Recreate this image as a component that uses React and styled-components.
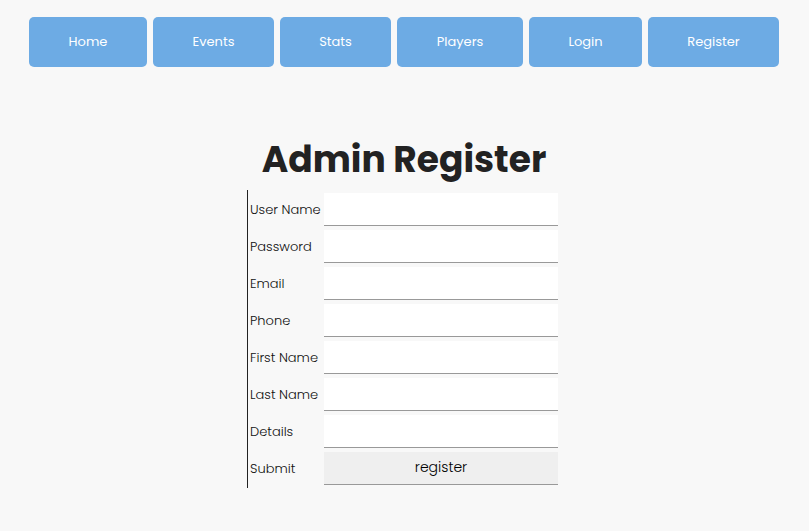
import React from "react";
import styled, { createGlobalStyle } from "styled-components";

const GlobalStyle = createGlobalStyle`
  * { box-sizing: border-box; }
  body {
    margin: 0;
    background: #f8f8f8;
    color: #222222;
    font-family: Poppins, Inter, sans-serif;
    font-size: 13px;
    line-height: 20px;
  }
`;

const Page = styled.div`
  display: flex;
  flex-direction: column;
  align-items: center;
  padding: 17px 1px 40px 0;
`;

const Nav = styled.nav`
  display: grid;
  grid-template-columns: 118fr 121fr 111fr 126fr 113fr 131fr;
  gap: 6px;
  width: 100%;
  max-width: 750px;
`;

const NavLink = styled.a`
  display: flex;
  align-items: center;
  justify-content: center;
  height: 50px;
  border-radius: 5px;
  background: #6dabe4;
  color: #ffffff;
  text-decoration: none;
`;

const Main = styled.main`
  display: flex;
  flex-direction: column;
  align-items: center;
  margin-top: 64px;
`;

const Title = styled.h1`
  margin: 0 0 2px;
  font-size: 36px;
  font-weight: 700;
  line-height: 57px;
`;

const Form = styled.form`
  display: grid;
  grid-template-columns: 72px minmax(0, 234px);
  gap: 4px 2px;
  align-items: center;
  padding: 3px 3px 3px 2px;
  border-left: 1px solid #222222;
`;

const Label = styled.label`
  color: #111111;
  font-weight: 300;
  white-space: nowrap;
`;

const Input = styled.input`
  width: 100%;
  height: 33px;
  padding: 0 8px;
  border: 0;
  border-bottom: 1px solid #999999;
  border-radius: 0;
  background: #ffffff;
  font: inherit;
`;

const SubmitButton = styled.button`
  width: 100%;
  height: 33px;
  padding: 0 0 2px;
  border: 0;
  border-bottom: 1px solid #999999;
  background: #efefef;
  color: #000000;
  font: inherit;
  font-size: 14px;
  font-weight: 300;
`;

const links = ["Home", "Events", "Stats", "Players", "Login", "Register"];

const fields = [
  { id: "username", label: "User Name", type: "text" },
  { id: "password", label: "Password", type: "password" },
  { id: "email", label: "Email", type: "email" },
  { id: "phone", label: "Phone", type: "tel" },
  { id: "firstname", label: "First Name", type: "text" },
  { id: "lastname", label: "Last Name", type: "text" },
  { id: "details", label: "Details", type: "text" },
];

export default function App() {
  return (
    <>
      <GlobalStyle />
      <Page>
        <Nav>
          {links.map((name) => (
            <NavLink key={name} href={`#${name.toLowerCase()}`}>
              {name}
            </NavLink>
          ))}
        </Nav>
        <Main>
          <Title>Admin Register</Title>
          <Form onSubmit={(event) => event.preventDefault()}>
            {fields.map(({ id, label, type }) => (
              <React.Fragment key={id}>
                <Label htmlFor={id}>{label}</Label>
                <Input id={id} name={id} type={type} />
              </React.Fragment>
            ))}
            <Label htmlFor="submit">Submit</Label>
            <SubmitButton id="submit" type="submit">
              register
            </SubmitButton>
          </Form>
        </Main>
      </Page>
    </>
  );
}
